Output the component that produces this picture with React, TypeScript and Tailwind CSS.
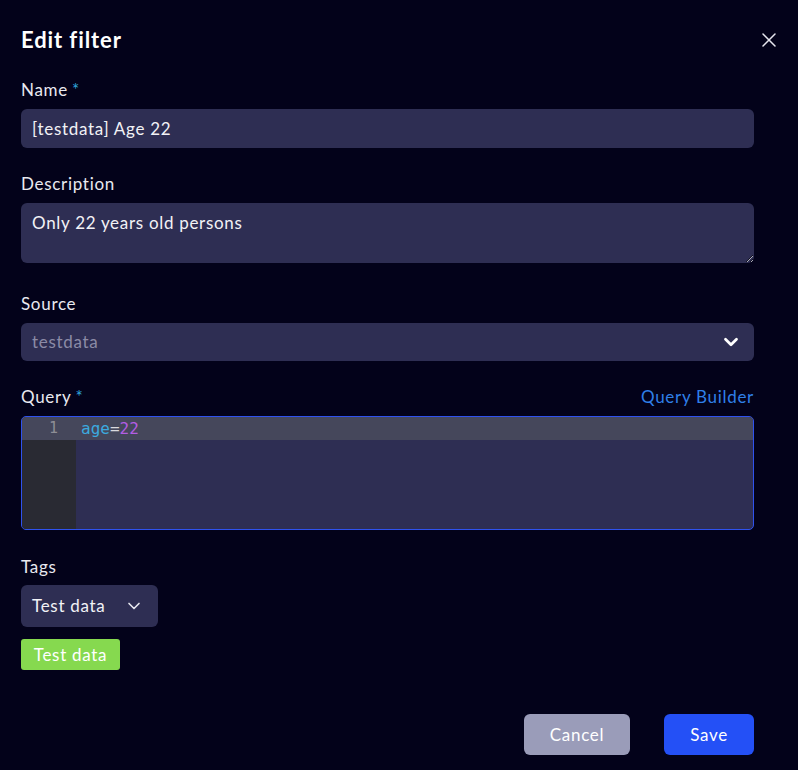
import { X, ChevronDown } from "lucide-react"

function Label({ text, required }: { text: string; required?: boolean }) {
    return (
        <div className="h-6 text-[17px] leading-6 tracking-[0.7px] text-[#e9e9f0]">
            {text}
            {required && <span className="ml-1 text-[#2fa6dc]">*</span>}
        </div>
    )
}

export default function App() {
    return (
        <div
            className="relative min-h-[770px] w-[798px] bg-[#03021a] text-white"
            style={{ fontFamily: "Lato, 'Noto Sans', sans-serif" }}
        >
            {/* close */}
            <button className="absolute right-[17px] top-[28px] text-[#e6e6ee]">
                <X size={24} strokeWidth={1.5} />
            </button>

            <div className="flex w-[754px] flex-col pl-[21px] pt-[26px] text-[17px] tracking-[0.7px]">
                <h1 className="h-7 text-[22px] font-bold leading-7 tracking-[0.9px] text-white">Edit filter</h1>

                {/* Name */}
                <div className="mt-6">
                    <Label text="Name" required />
                    <div className="mt-[7px] flex h-[39px] items-center rounded-md bg-[#2e2e53] px-[11px] text-[#f2f2f6]">
                        [testdata] Age 22
                    </div>
                </div>

                {/* Description */}
                <div className="mt-6">
                    <Label text="Description" />
                    <textarea
                        readOnly
                        defaultValue="Only 22 years old persons"
                        className="mt-[7px] block h-[60px] w-full rounded-md bg-[#2e2e53] px-[11px] py-[8px] leading-6 text-[#f2f2f6] outline-none"
                    />
                </div>

                {/* Source */}
                <div className="mt-[29px]">
                    <Label text="Source" />
                    <div className="mt-[7px] flex h-[38px] items-center justify-between rounded-md bg-[#2e2e53] pl-[11px] pr-[12px] text-[#8b8ba6]">
                        <span>testdata</span>
                        <ChevronDown size={22} strokeWidth={3} className="text-white" />
                    </div>
                </div>

                {/* Query */}
                <div className="mt-6">
                    <div className="flex items-center justify-between">
                        <Label text="Query" required />
                        <span className="leading-6 text-[#2f7fe8]">Query Builder</span>
                    </div>
                    <div className="mt-[7px] flex h-[114px] flex-col overflow-hidden rounded-[5px] border border-[#2f52ee] bg-[#2e2e53] tracking-normal">
                        <div className="flex h-[23px] items-center bg-[#45475b]">
                            <div className="w-[54px] pr-[18px] text-right text-[15px] text-[#8e8e96]" style={{ fontFamily: "'DejaVu Sans Mono', monospace" }}>
                                1
                            </div>
                            <div className="pl-[5px] text-[16px]" style={{ fontFamily: "'DejaVu Sans Mono', monospace" }}>
                                <span className="text-[#3caadf]">age</span>
                                <span className="text-[#d9d9de]">=</span>
                                <span className="text-[#b35de3]">22</span>
                            </div>
                        </div>
                        <div className="flex flex-1">
                            <div className="w-[54px] bg-[#292a33]" />
                            <div className="flex-1" />
                        </div>
                    </div>
                </div>

                {/* Tags */}
                <div className="mt-[25px]">
                    <Label text="Tags" />
                    <div className="mt-[6px] flex h-[42px] w-[137px] items-center justify-between rounded-md bg-[#2e2e53] pl-[11px] pr-[14px] text-[#f2f2f6]">
                        <span>Test data</span>
                        <ChevronDown size={20} strokeWidth={2} className="text-[#e6e6ee]" />
                    </div>
                    <div className="mt-3 flex h-[31px] w-[99px] items-center justify-center rounded-[3px] bg-[#86d94f] text-white">
                        Test data
                    </div>
                </div>

                {/* Actions */}
                <div className="mt-[44px] flex justify-end gap-[34px]">
                    <button className="h-[41px] w-[106px] rounded-md bg-[#9a9cb9] text-white">Cancel</button>
                    <button className="h-[41px] w-[90px] rounded-md bg-[#2450f6] text-white">Save</button>
                </div>
            </div>
        </div>
    )
}
